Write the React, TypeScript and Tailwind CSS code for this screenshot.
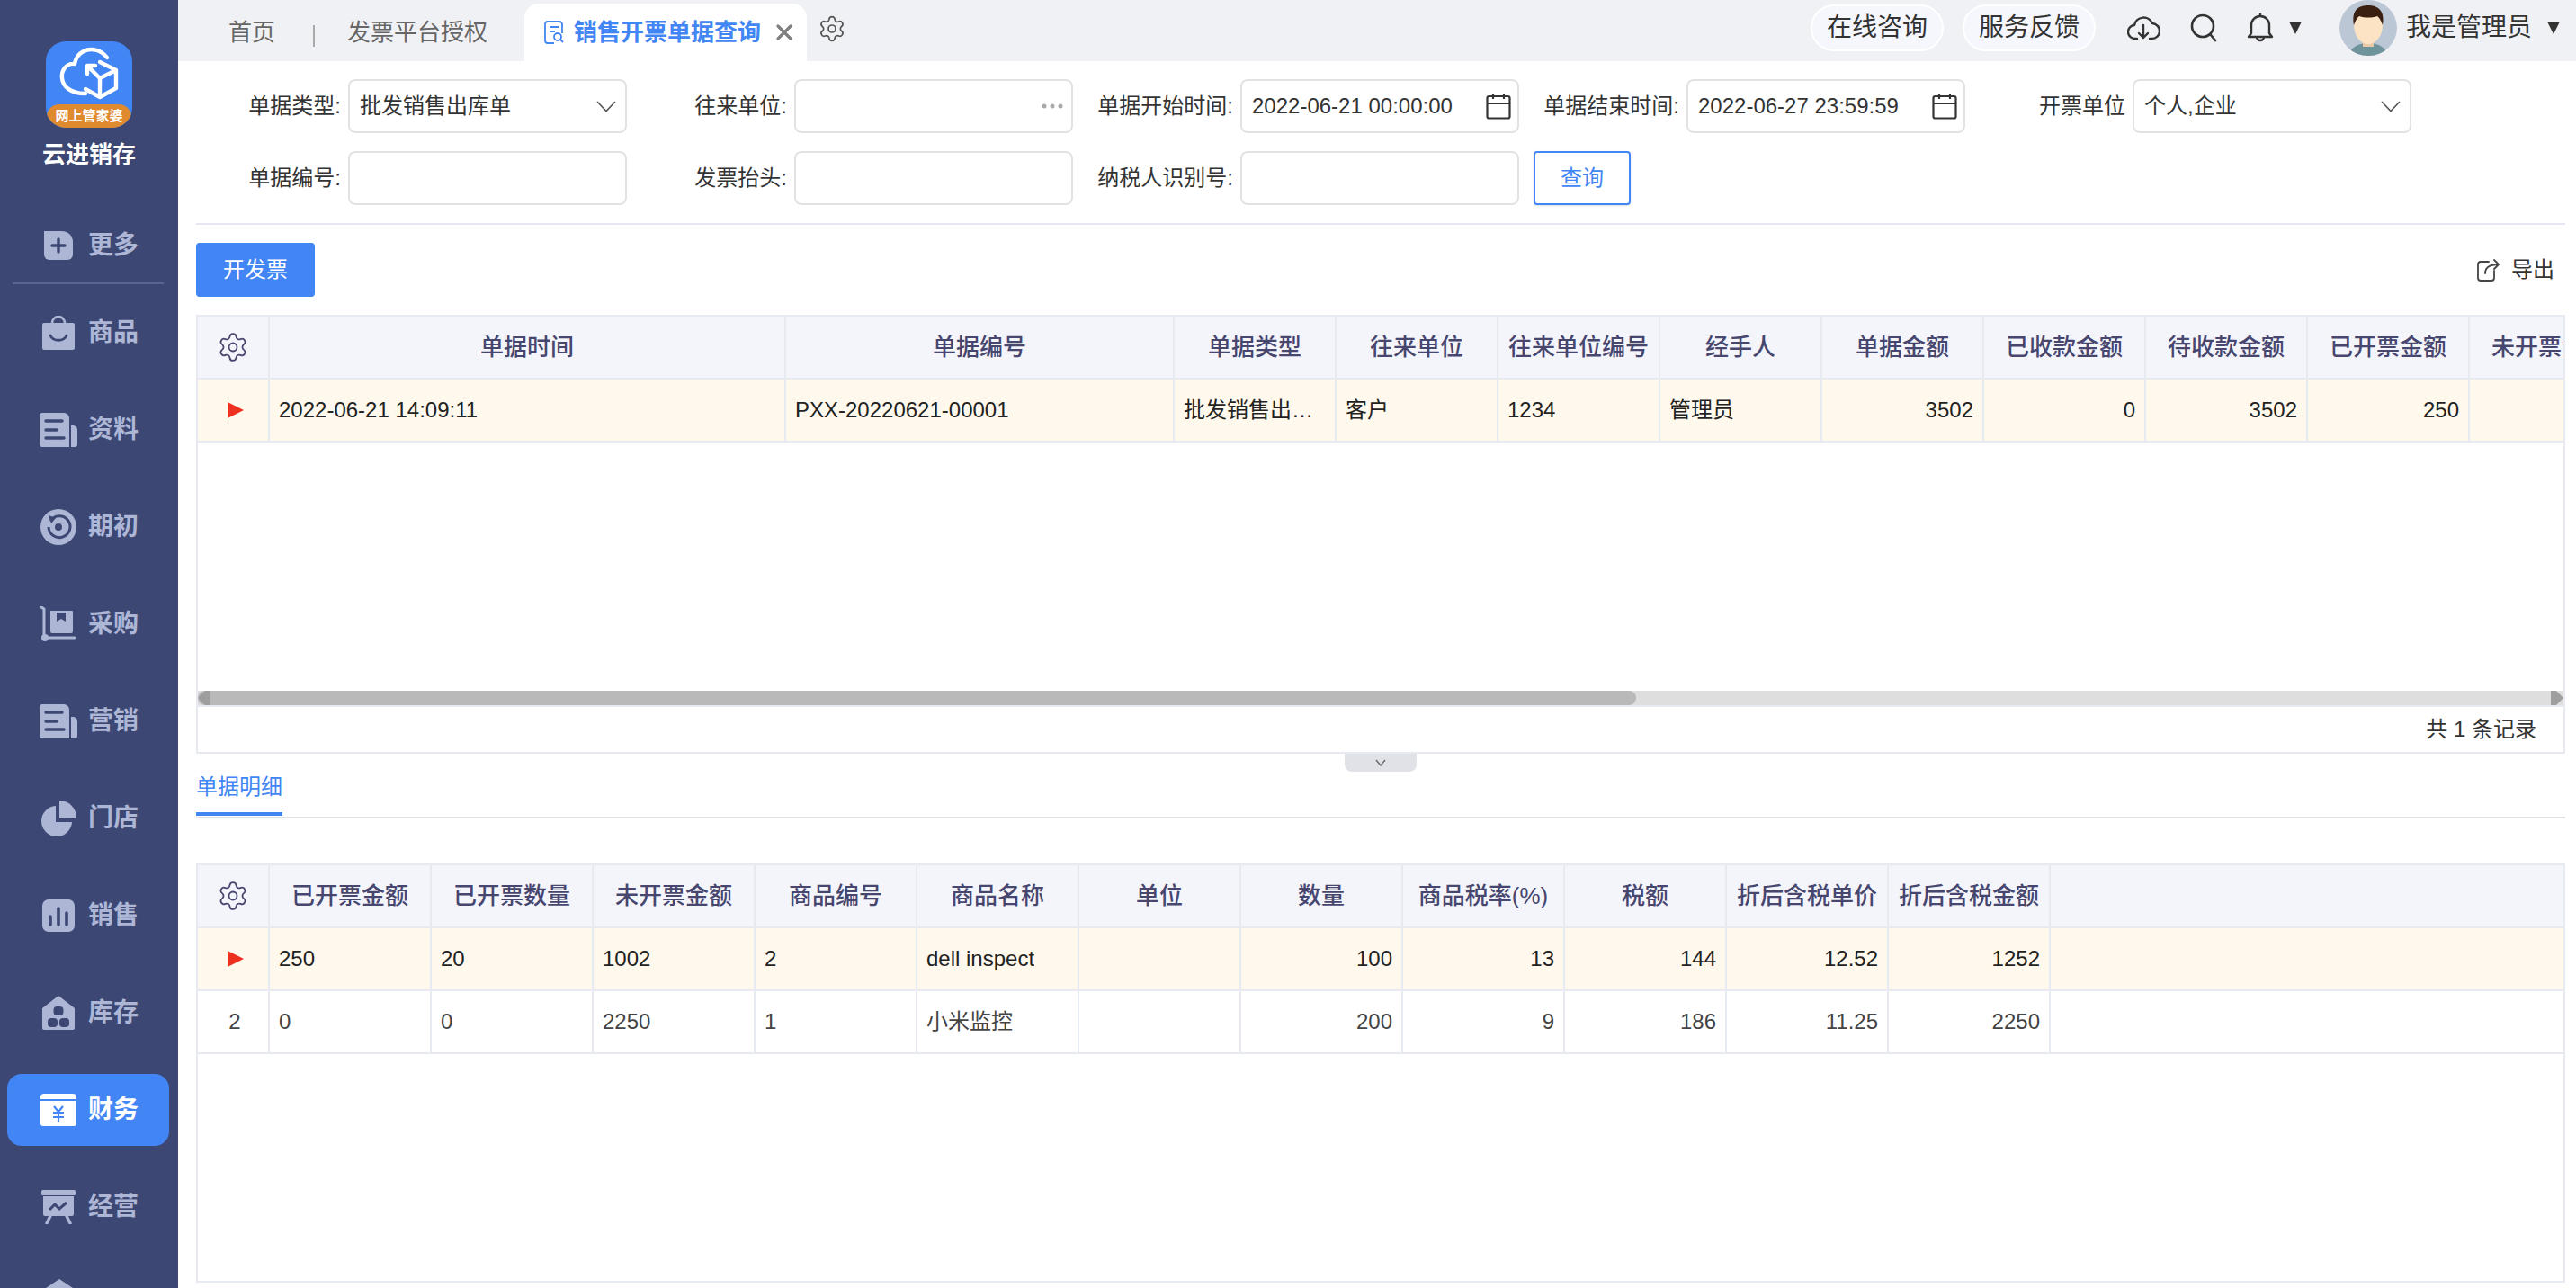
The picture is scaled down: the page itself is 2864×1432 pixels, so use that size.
import type { ReactNode } from "react";
import { Settings, X } from "lucide-react";

const SIDE = "#3c4873";

// sidebar icons
function IconMore() {
    return (
        <svg width="34" height="34" viewBox="0 0 34 34" fill="currentColor">
            <path d="M1 1h20a12 12 0 0 1 12 12v14a6 6 0 0 1-6 6H7a6 6 0 0 1-6-6z" />
            <path d="M17 10v14M10 17h14" stroke={SIDE} strokeWidth="3.4" strokeLinecap="round" />
        </svg>
    );
}

function IconBag() {
    return (
        <svg width="36" height="38" viewBox="0 0 36 38" fill="currentColor">
            <path d="M2 8h32a2 2 0 0 1 2 2v26a2 2 0 0 1-2 2H2a2 2 0 0 1-2-2V10a2 2 0 0 1 2-2z" />
            <path d="M11 8a7 7 0 0 1 14 0" fill="none" stroke="currentColor" strokeWidth="2.6" />
            <path d="M9 22c3 7 15 7 18 0" fill="none" stroke={SIDE} strokeWidth="2.8" strokeLinecap="round" />
        </svg>
    );
}

function IconDoc() {
    return (
        <svg width="42" height="38" viewBox="0 0 42 38" fill="currentColor">
            <path d="M3 0h24a6 6 0 0 1 6 6v32H3a3 3 0 0 1-3-3V3a3 3 0 0 1 3-3z" />
            <path d="M35 14h2a5 5 0 0 1 5 5v16a3 3 0 0 1-3 3h-4z" />
            <path d="M7 9h18M7 19h12M7 28h20" stroke={SIDE} strokeWidth="3.4" strokeLinecap="round" />
        </svg>
    );
}

function IconInit() {
    return (
        <svg width="40" height="40" viewBox="0 0 40 40" fill="currentColor">
            <circle cx="20" cy="20" r="20" />
            <path d="M11 13a12 12 0 1 1-2 7" fill="none" stroke={SIDE} strokeWidth="3" />
            <path d="M9 7l8 3-5 6z" fill={SIDE} />
            <circle cx="20" cy="20" r="4" fill={SIDE} />
        </svg>
    );
}

function IconCart() {
    return (
        <svg width="40" height="40" viewBox="0 0 40 40" fill="currentColor">
            <path d="M1 1l3 2v30M6 35h32" fill="none" stroke="currentColor" strokeWidth="3" strokeLinecap="round" />
            <circle cx="5" cy="35" r="4" />
            <path fillRule="evenodd" d="M11 5h24a1 1 0 0 1 1 1v22a2 2 0 0 1-2 2H13a2 2 0 0 1-2-2zM18 7v10l5-3 5 3V7z" />
        </svg>
    );
}

function IconPie() {
    return (
        <svg width="40" height="40" viewBox="0 0 40 40" fill="currentColor">
            <path d="M17 6v18h18a17 17 0 1 1-18-18z" />
            <path d="M21 0a19 19 0 0 1 19 20H21z" />
        </svg>
    );
}

function IconChart() {
    return (
        <svg width="36" height="36" viewBox="0 0 36 36" fill="currentColor">
            <rect width="36" height="36" rx="7" />
            <path d="M9 19v9M18 10v18M27 15v13" stroke={SIDE} strokeWidth="3.6" strokeLinecap="round" />
        </svg>
    );
}

function IconStore() {
    return (
        <svg width="36" height="38" viewBox="0 0 36 38" fill="currentColor">
            <path d="M18 0l18 14v22a2 2 0 0 1-2 2H2a2 2 0 0 1-2-2V14z" />
            <rect x="12.5" y="12" width="11" height="10" rx="4" fill={SIDE} />
            <rect x="6" y="25" width="11" height="10" rx="4" fill={SIDE} />
            <rect x="19" y="25" width="11" height="10" rx="4" fill={SIDE} />
        </svg>
    );
}

function IconWallet() {
    return (
        <svg width="40" height="36" viewBox="0 0 40 36" fill="currentColor">
            <path d="M4 0h32a4 4 0 0 1 4 4v2H0V4a4 4 0 0 1 4-4z" />
            <path d="M0 8h40v25a3 3 0 0 1-3 3H3a3 3 0 0 1-3-3z" />
            <path d="M15 14l5 6 5-6M14 21h12M14 26h12M20 20v11" fill="none" stroke="#4285f4" strokeWidth="2.2" />
        </svg>
    );
}

function IconBoard() {
    return (
        <svg width="38" height="38" viewBox="0 0 38 38" fill="currentColor">
            <rect width="38" height="6" rx="1.5" />
            <path d="M2 7h34v20a2 2 0 0 1-2 2H4a2 2 0 0 1-2-2z" />
            <path d="M9 22l6-6 5 5 8-7" fill="none" stroke={SIDE} strokeWidth="3" />
            <path d="M10 29l-4 8M28 29l4 8" stroke="currentColor" strokeWidth="3.4" strokeLinecap="round" />
        </svg>
    );
}

function IconRoof() {
    return (
        <svg width="36" height="44" viewBox="0 0 36 44" fill="currentColor">
            <path d="M18 0l18 12v32H0V12z" />
        </svg>
    );
}

const NAV_ITEMS: { label: string; icon: ReactNode; active?: boolean }[] = [
    { label: "商品", icon: <IconBag /> },
    { label: "资料", icon: <IconDoc /> },
    { label: "期初", icon: <IconInit /> },
    { label: "采购", icon: <IconCart /> },
    { label: "营销", icon: <IconDoc /> },
    { label: "门店", icon: <IconPie /> },
    { label: "销售", icon: <IconChart /> },
    { label: "库存", icon: <IconStore /> },
    { label: "财务", icon: <IconWallet />, active: true },
    { label: "经营", icon: <IconBoard /> },
];

function NavRow({ label, icon, active }: { label: string; icon: ReactNode; active?: boolean }) {
    return (
        <div className="h-[108px] shrink-0 flex items-center">
            <div className={active
                ? "ml-2 w-[180px] h-20 rounded-2xl bg-[#4285f4] text-white flex items-center"
                : "ml-2 w-[180px] h-20 rounded-2xl text-[#aeb6d6] flex items-center"}
            >
                <span className="ml-[35px] w-11 flex justify-center">{icon}</span>
                <span className="ml-[11px] text-[28px] font-bold leading-none">{label}</span>
            </div>
        </div>
    );
}

function Logo() {
    return (
        <div className="w-24 h-24 rounded-[22px] bg-[#4285f4] overflow-hidden flex flex-col">
            <svg width="96" height="70" viewBox="0 0 96 70" fill="none" stroke="white" strokeWidth="4.4" strokeLinejoin="round" strokeLinecap="round">
                <path d="M68 18C61 9 50 7 42 11 36 14 33 19 32 25 22 24 17 33 18 41 19 50 27 58 44 58" />
                <path d="M60 23l18 9v20l-18 10V41l18-9M60 62l-16-9" />
                <path d="M47 28l12 12M46 36v-9h9" />
            </svg>
            <div className="h-[26px] mx-px rounded-t-[14px] bg-[#e08a30] text-white text-[15px] font-bold leading-[26px] text-center whitespace-nowrap">
                网上管家婆
            </div>
        </div>
    );
}

function Sidebar() {
    return (
        <aside className="w-[198px] h-full shrink-0 bg-[#3c4873] overflow-hidden flex flex-col">
            <div className="pt-[46px] flex flex-col items-center">
                <Logo />
                <div className="mt-3 h-9 text-[26px] leading-9 font-bold text-white">云进销存</div>
            </div>
            <div className="mt-[42px] h-[82px] shrink-0 flex items-center">
                <div className="ml-2 w-[180px] flex items-center text-[#aeb6d6]">
                    <span className="ml-[35px] w-11 flex justify-center"><IconMore /></span>
                    <span className="ml-[11px] text-[28px] font-bold leading-none">更多</span>
                </div>
            </div>
            <div className="ml-3.5 w-[168px] h-0.5 bg-[#5a658d] shrink-0" />
            {NAV_ITEMS.map((item) => (
                <NavRow key={item.label} {...item} />
            ))}
            <div className="ml-[48px] mt-[26px] text-[#aeb6d6]"><IconRoof /></div>
        </aside>
    );
}

function Caret() {
    return (
        <svg width="14" height="16" viewBox="0 0 14 16" fill="#333">
            <path d="M0 1h14L7 15z" />
        </svg>
    );
}

function Header() {
    return (
        <header className="h-[68px] shrink-0 bg-[#f0f1f5] flex items-stretch text-[26px] text-[#666]">
            <div className="ml-[56px] pt-1 flex items-center">首页</div>
            <div className="ml-[42px] mt-7 h-6 w-0.5 bg-[#aaa]" />
            <div className="ml-[36px] pt-1 flex items-center">发票平台授权</div>
            <div className="ml-[41px] mt-1 w-[314px] rounded-t-2xl bg-white flex items-center">
                <svg className="ml-[22px]" width="22" height="26" viewBox="0 0 22 26" fill="none" stroke="#4285f4" strokeWidth="1.8">
                    <path d="M20 14V4a3 3 0 0 0-3-3H4a3 3 0 0 0-3 3v18a3 3 0 0 0 3 3h7" />
                    <path d="M6 7h10M6 12h6" />
                    <circle cx="15" cy="18" r="4" />
                    <path d="M18 21l3 3" />
                </svg>
                <span className="ml-[11px] font-bold text-[#4285f4] whitespace-nowrap">销售开票单据查询</span>
                <X className="ml-[12px] text-[#808080] shrink-0" size={28} strokeWidth={2.8} />
            </div>
            <div className="ml-3 flex items-center pb-1">
                <Settings size={32} strokeWidth={1.3} className="text-[#555]" />
            </div>
            <div className="ml-auto flex items-center h-[62px] text-[28px] text-[#333]">
                <div className="w-[148px] h-[52px] rounded-full border-2 border-white bg-[#f5f7fd] flex items-center justify-center">在线咨询</div>
                <div className="ml-[21px] w-[148px] h-[52px] rounded-full border-2 border-white bg-[#f5f7fd] flex items-center justify-center">服务反馈</div>
                <svg className="ml-[35px]" width="36" height="30" viewBox="0 0 36 30" fill="none" stroke="#333" strokeWidth="2.4" strokeLinecap="round" strokeLinejoin="round">
                    <path d="M11 27H9A7.5 7.5 0 0 1 8 12 10.500 10.500 0 0 1 28 10a8.500 8.500 0 0 1-1 17h-2" />
                    <path d="M18 12v14M13 21l5 5 5-5" />
                </svg>
                <svg className="ml-[34px]" width="30" height="32" viewBox="0 0 30 32" fill="none" stroke="#333" strokeWidth="2.6" strokeLinecap="round">
                    <circle cx="14" cy="14" r="12" />
                    <path d="M23 24l5 6" />
                </svg>
                <svg className="ml-[33px]" width="30" height="34" viewBox="0 0 30 34" fill="none" stroke="#333" strokeWidth="2.4" strokeLinejoin="round">
                    <path d="M15 4a10 10 0 0 0-10 10v9l-3 4h26l-3-4v-9A10 10 0 0 0 15 4z" />
                    <path d="M15 1v3M11 27a4 4 0 0 0 8 0" />
                </svg>
                <span className="ml-[17px]"><Caret /></span>
                <svg className="ml-[42px]" width="64" height="62" viewBox="0 0 64 62">
                    <defs>
                        <clipPath id="avatar-clip"><ellipse cx="32" cy="31" rx="32" ry="31" /></clipPath>
                    </defs>
                    <g clipPath="url(#avatar-clip)">
                        <rect width="64" height="62" fill="#bcc7d6" />
                        <path d="M10 62c2-10 12-14 22-14s20 4 22 14z" fill="#6f939b" />
                        <rect x="26" y="40" width="12" height="12" fill="#e8c9a8" />
                        <ellipse cx="32" cy="28" rx="16" ry="21" fill="#fbe3c4" />
                        <path d="M16 28C13 10 22 6 32 6s19 5 16 22c-2-5-3-8-6-10-6 2-14 2-20 0-3 2-4 5-6 10z" fill="#3a2010" />
                    </g>
                </svg>
                <span className="ml-[10px] whitespace-nowrap">我是管理员</span>
                <span className="ml-[17px] mr-[18px]"><Caret /></span>
            </div>
        </header>
    );
}

function Field({ label, children }: { label?: string; children: ReactNode }) {
    return (
        <div className="flex items-center justify-end h-[60px] text-[24px] text-[#333]">
            {label && <span className="mr-2 whitespace-nowrap">{label}</span>}
            {children}
        </div>
    );
}

function Box({ children }: { children?: ReactNode }) {
    return (
        <div className="w-[310px] h-[60px] shrink-0 rounded-lg border-2 border-[#e2e2e2] bg-white flex items-center justify-between pl-[11px] pr-[7px] whitespace-nowrap">
            {children}
        </div>
    );
}

function Chevron() {
    return (
        <svg className="mr-[3px]" width="22" height="13" viewBox="0 0 22 13" fill="none" stroke="#555" strokeWidth="1.6">
            <path d="M1 1l10 10.500L21 1" />
        </svg>
    );
}

function Calendar() {
    return (
        <svg width="28" height="30" viewBox="0 0 28 30" fill="none" stroke="#333" strokeWidth="2.2">
            <rect x="1.500" y="4" width="25" height="24.500" rx="2" />
            <path d="M1.500 12h25M8 1v6M20 1v6" />
        </svg>
    );
}

function FilterForm() {
    return (
        <div className="pt-5 pb-5 border-b-2 border-[#e6e6f2] grid grid-cols-[479px_496px_496px_496px_496px] gap-y-5">
            <Field label="单据类型:"><Box>批发销售出库单<Chevron /></Box></Field>
            <Field label="往来单位:">
                <Box>
                    <span />
                    <svg className="mr-[2px]" width="24" height="6" viewBox="0 0 24 6" fill="#aaa">
                        <circle cx="3" cy="3" r="2.500" /><circle cx="12" cy="3" r="2.500" /><circle cx="21" cy="3" r="2.500" />
                    </svg>
                </Box>
            </Field>
            <Field label="单据开始时间:"><Box>2022-06-21 00:00:00<Calendar /></Box></Field>
            <Field label="单据结束时间:"><Box>2022-06-27 23:59:59<Calendar /></Box></Field>
            <Field label="开票单位"><Box>个人,企业<Chevron /></Box></Field>

            <Field label="单据编号:"><Box /></Field>
            <Field label="发票抬头:"><Box /></Field>
            <Field label="纳税人识别号:"><Box /></Field>
            <div className="h-[60px] flex items-center">
                <button className="ml-4 w-[108px] h-[60px] rounded border-2 border-[#4285f4] bg-white text-[24px] text-[#4285f4] shadow-sm">查询</button>
            </div>
        </div>
    );
}

type Column = { title: string; width: string; right?: boolean };

function GearCell() {
    return (
        <div className="w-20 shrink-0 border-r-2 border-[#e8eaf2] flex items-center justify-center">
            <Settings size={36} strokeWidth={1.2} className="text-[#46466e]" />
        </div>
    );
}

function MarkerCell({ index }: { index?: number }) {
    return (
        <div className="w-20 shrink-0 border-r-2 border-[#e8eaf2] flex items-center justify-center">
            {index === undefined ? (
                <svg className="ml-[6px]" width="18" height="18" viewBox="0 0 18 18" fill="#ee3020">
                    <path d="M0 0l18 9-18 9z" />
                </svg>
            ) : (
                <span className="ml-[4px] text-[#444]">{index}</span>
            )}
        </div>
    );
}

function DataGrid({ columns, rows, filler }: { columns: Column[]; rows: string[][]; filler?: boolean }) {
    return (
        <div className="w-full overflow-hidden text-[24px]">
            <div className="h-[70px] flex border-b-2 border-[#e8eaf2] bg-[#f4f4fb]">
                <GearCell />
                {columns.map((c) => (
                    <div key={c.title} className={`${c.width} shrink-0 border-r-2 border-[#e8eaf2] flex items-center justify-center text-[26px] font-medium text-[#46466e] whitespace-nowrap`}>
                        {c.title}
                    </div>
                ))}
            </div>
            {rows.map((row, i) => (
                <div key={i} className={i === 0 ? "h-[70px] flex border-b-2 border-[#e8eaf2] bg-[#fff8ec] text-[#222]" : "h-[70px] flex border-b-2 border-[#e8eaf2] bg-white text-[#444]"}>
                    <MarkerCell index={i === 0 ? undefined : i + 1} />
                    {columns.map((c, j) => (
                        <div key={c.title} className={`${c.width} shrink-0 border-r-2 border-[#e8eaf2] flex items-center px-2.5 ${c.right ? "justify-end" : ""}`}>
                            <span className="truncate">{row[j]}</span>
                        </div>
                    ))}
                    {filler && <div className="flex-1" />}
                </div>
            ))}
        </div>
    );
}

const MASTER_COLUMNS: Column[] = [
    { title: "单据时间", width: "w-[574px]" },
    { title: "单据编号", width: "w-[432px]" },
    { title: "单据类型", width: "w-[180px]" },
    { title: "往来单位", width: "w-[180px]" },
    { title: "往来单位编号", width: "w-[180px]" },
    { title: "经手人", width: "w-[180px]" },
    { title: "单据金额", width: "w-[180px]", right: true },
    { title: "已收款金额", width: "w-[180px]", right: true },
    { title: "待收款金额", width: "w-[180px]", right: true },
    { title: "已开票金额", width: "w-[180px]", right: true },
    { title: "未开票金额", width: "w-[180px]", right: true },
];

const MASTER_ROWS = [
    ["2022-06-21 14:09:11", "PXX-20220621-00001", "批发销售出库单", "客户", "1234", "管理员", "3502", "0", "3502", "250", ""],
];

const DETAIL_COLUMNS: Column[] = [
    { title: "已开票金额", width: "w-[180px]" },
    { title: "已开票数量", width: "w-[180px]" },
    { title: "未开票金额", width: "w-[180px]" },
    { title: "商品编号", width: "w-[180px]" },
    { title: "商品名称", width: "w-[180px]" },
    { title: "单位", width: "w-[180px]" },
    { title: "数量", width: "w-[180px]", right: true },
    { title: "商品税率(%)", width: "w-[180px]", right: true },
    { title: "税额", width: "w-[180px]", right: true },
    { title: "折后含税单价", width: "w-[180px]", right: true },
    { title: "折后含税金额", width: "w-[180px]", right: true },
];

const DETAIL_ROWS = [
    ["250", "20", "1002", "2", "dell inspect", "", "100", "13", "144", "12.52", "1252"],
    ["0", "0", "2250", "1", "小米监控", "", "200", "9", "186", "11.25", "2250"],
];

function ScrollBar() {
    return (
        <div className="h-[18px] shrink-0 border-b-2 border-[#e8eaf2] bg-[#dedede] flex justify-between">
            <div className="w-[1599px] rounded-r-lg rounded-l-lg bg-[#b9b9b9]">
                <svg width="14" height="16" viewBox="0 0 14 16" fill="#9e9e9e">
                    <path d="M14 0v16H8L0 8l8-8z" />
                </svg>
            </div>
            <svg width="14" height="16" viewBox="0 0 14 16" fill="#9e9e9e">
                <path d="M0 0h6l8 8-8 8H0z" />
            </svg>
        </div>
    );
}

export default function App() {
    return (
        <div className="w-[2864px] h-[1432px] overflow-hidden flex bg-white font-['Liberation_Sans','Noto_Sans_CJK_SC',sans-serif]">
            <Sidebar />
            <main className="flex-1 min-w-0 flex flex-col">
                <Header />
                <div className="pl-5 pr-3 flex-1 min-h-0 flex flex-col">
                    <FilterForm />

                    <div className="mt-5 h-[60px] shrink-0 flex items-center justify-between">
                        <button className="w-[132px] h-[60px] rounded bg-[#4285f4] text-white text-[24px]">开发票</button>
                        <div className="flex items-center text-[24px] text-[#333]">
                            <svg width="26" height="26" viewBox="0 0 26 26" fill="none" stroke="#444" strokeWidth="1.8" strokeLinecap="round" strokeLinejoin="round">
                                <path d="M13 4H4a3 3 0 0 0-3 3v15a3 3 0 0 0 3 3h12a3 3 0 0 0 3-3v-8" />
                                <path d="M9 17c0-6 4-10 15-10M19 2l5 5-5 5" />
                            </svg>
                            <span className="ml-3 mr-3">导出</span>
                        </div>
                    </div>

                    <div className="mt-5 h-[488px] shrink-0 border-2 border-[#e8eaf2] flex flex-col">
                        <DataGrid columns={MASTER_COLUMNS} rows={MASTER_ROWS} />
                        <div className="flex-1" />
                        <ScrollBar />
                        <div className="h-[50px] shrink-0 pr-[30px] flex items-center justify-end text-[24px] text-[#333]">共 1 条记录</div>
                    </div>

                    <div className="h-5 shrink-0 flex justify-center">
                        <div className="w-20 h-5 rounded-b-lg bg-[#e0e2e8] flex items-center justify-center">
                            <svg width="12" height="8" viewBox="0 0 12 8" fill="none" stroke="#666" strokeWidth="1.4">
                                <path d="M1 1l5 6 5-6" />
                            </svg>
                        </div>
                    </div>

                    <div className="shrink-0 border-b-2 border-[#e0e0e0]">
                        <div className="w-24 pb-px">
                            <div className="h-[34px] mb-[11px] text-[24px] leading-[34px] text-[#4285f4] whitespace-nowrap">单据明细</div>
                            <div className="h-1 bg-[#4285f4]" />
                        </div>
                    </div>

                    <div className="mt-[50px] h-[466px] shrink-0 border-2 border-[#e8eaf2]">
                        <DataGrid columns={DETAIL_COLUMNS} rows={DETAIL_ROWS} filler />
                    </div>
                </div>
            </main>
        </div>
    );
}
